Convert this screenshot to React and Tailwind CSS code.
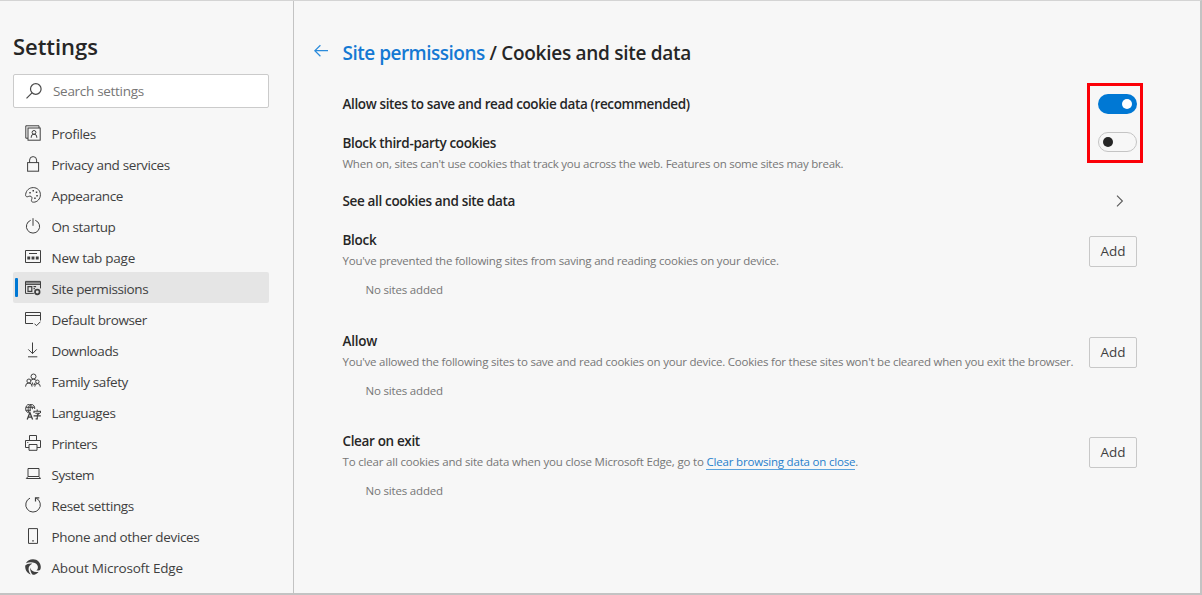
import React from "react";

const Svg = ({ children, className = "h-4 w-4" }) => (
  <svg
    viewBox="0 0 16 16"
    className={`${className} shrink-0`}
    fill="none"
    stroke="currentColor"
    strokeWidth="1"
  >
    {children}
  </svg>
);

const icons = {
  profiles: (
    <Svg>
      <path d="M3 13.2H.8V.8H14V3" />
      <rect x="3" y="3" width="12.2" height="12.2" />
      <circle cx="9" cy="7.4" r="1.9" />
      <path d="M6.2 12.8V12a2.8 2.8 0 0 1 5.6 0v.8" />
    </Svg>
  ),
  lock: (
    <Svg>
      <rect x="2.6" y="6.6" width="11" height="8.6" />
      <path d="M4.6 6.6V4.1a3.5 3.5 0 0 1 7 0v2.5" />
    </Svg>
  ),
  palette: (
    <Svg>
      <path d="M.6 7.6C1.2 3.2 4.300 .6 8.300 .6c4.100 0 7.100 3.100 7.100 7 0 4.500-3.300 7.600-6.800 7.600-2 0-2.600-1.200-2-2.600.6-1.500.5-2.600-.5-3.200C4.300 8.500 3 10 1.900 9.800 1 9.600.4 8.700.6 7.600z" />
      <path
        d="M4.300 4.900h1.500v1.500H4.300zM7.500 3h1.500v1.500H7.500zM10.800 4.600h1.500v1.500h-1.500zM11.300 8h1.500v1.500h-1.500zM9.200 10.600h1.500v1.500H9.200z"
        fill="currentColor"
        stroke="none"
      />
    </Svg>
  ),
  power: (
    <Svg>
      <path d="M8 .2v7.600M5.700 2.300a6.600 6.600 0 1 0 4.600 0" />
    </Svg>
  ),
  newtab: (
    <Svg>
      <path d="M.5 1.500h15v12H.5zM4 4.500h8" />
      <path
        d="M2.300 7.500h2.900v2.900H2.300zM6.550 7.500h2.900v2.900h-2.900zM10.800 7.500h2.900v2.900h-2.900z"
        fill="currentColor"
        stroke="none"
      />
    </Svg>
  ),
  permissions: (
    <Svg>
      <path d="M8.800 13.400H.5V1.400h15v7M.5 4.400h15M.5 2.900h15" />
      <path d="M3 6.600h3.800v4.700H3zM8.500 6.600h2.600M8.500 8.700h1.400" strokeWidth="1.200" />
      <circle cx="12.300" cy="12" r="2.300" strokeWidth="1.700" />
    </Svg>
  ),
  browser: (
    <Svg>
      <path d="M8 12.500H.5V1.500h15v8M.5 4.500h15M9.500 12.700l2 2 4-4" />
    </Svg>
  ),
  download: (
    <Svg>
      <path d="M7.500.5v11M3.300 7.400l4.200 4.200 4.200-4.200M3 14.800h9.300" />
    </Svg>
  ),
  family: (
    <Svg>
      <circle cx="8.500" cy="3.500" r="2.500" />
      <circle cx="3.900" cy="8" r="2" />
      <circle cx="12.400" cy="8.700" r="1.700" />
      <path d="M.6 13.700v-.5a3.200 3.200 0 0 1 6.400 0v.5M9.800 13.700v-.4a2.700 2.700 0 0 1 5.400 0v.4M5.800 7.300a4 4 0 0 1 5.400 0M7.300 9.400l.9 3M10 9.800l-.8 2.200" />
    </Svg>
  ),
  languages: (
    <Svg>
      <path d="M9.700 5A4.500 4.500 0 1 0 3.500 8.800M5.200.5C2.700 2.500 2.700 6.500 4.200 9M5.200.5c1.600 1.100 2.200 2.700 2.200 4.700M.8 3.300h8.600M.8 6.300h5M5.200.5v6" />
      <path d="M2.200 15.600l2.700-7 2.700 7M3.100 13.200h3.600" strokeWidth="1.300" />
      <path d="M12.200 5.500v1.500M9 9V7.300h6.500V9M10.300 9.200h4l-2 1.800v3.900h-1.700M8.600 11.900h7.200" strokeWidth="1.100" />
    </Svg>
  ),
  printer: (
    <Svg>
      <path d="M4.500 5.500v-5h7v5M4 12.500H.5v-7h15v7H12M4 9.500h8v5.800H4z" />
      <path d="M2.300 7.500h1" />
    </Svg>
  ),
  laptop: (
    <Svg>
      <path d="M3 2.500h11v8H3zM3 10.500l-1.700 2h14.200l-1.500-2" />
    </Svg>
  ),
  reset: (
    <Svg>
      <path d="M5 1.100A7.300 7.300 0 1 0 11.300 1.200" />
      <path d="M10.500 4.500v-3.700h3.800" strokeWidth="1.200" />
    </Svg>
  ),
  phone: (
    <Svg>
      <path d="M3.500.6h9v14.800h-9zM7 12.900h2" />
    </Svg>
  ),
  edge: (
    <Svg>
      <g fill="currentColor" stroke="none">
        <path d="M.9 4.300C2.300 1.700 4.900.2 8 .2c4.400 0 7.800 3.500 7.800 7.800 0 1.200-.3 2.200-.8 3.100-1.200.5-2.600.6-3.600.4 1.500-1.300 2-3.200 1.100-5C11.200 3.700 5.600 2.300.9 4.300z" />
        <path d="M.3 6.500C1.700 5 4.600 4.200 7.200 4.700 4.300 6 3.200 8.400 3.700 11.200c.3 1.600 1 2.900 2 4.200C2.100 14.300-.3 10.500.3 6.500z" />
        <path d="M5.200 8.400c.6 3 3.400 5 7.200 4.600.5 0 1-.2 1.400-.3-1.500 1.900-3.700 3.100-6.100 3.100-1.500-1.700-2.900-4.600-2.500-7.400z" />
      </g>
    </Svg>
  ),
};

const items = [
  ["Profiles", "profiles", "tracking-[-0.35px]"],
  ["Privacy and services", "lock", "tracking-[-0.37px]"],
  ["Appearance", "palette", "tracking-[-0.4px]"],
  ["On startup", "power", "tracking-[-0.4px]"],
  ["New tab page", "newtab", "tracking-[-0.25px]"],
  ["Site permissions", "permissions", "tracking-[-0.4px]"],
  ["Default browser", "browser", "tracking-[-0.4px]"],
  ["Downloads", "download", "tracking-[-0.4px]"],
  ["Family safety", "family", "tracking-[-0.4px]"],
  ["Languages", "languages", "tracking-[-0.35px]"],
  ["Printers", "printer", "tracking-[-0.5px]"],
  ["System", "laptop", "tracking-[-0.5px]"],
  ["Reset settings", "reset", "tracking-[-0.35px]"],
  ["Phone and other devices", "phone", "tracking-[-0.34px]"],
  ["About Microsoft Edge", "edge", "tracking-[-0.2px]"],
];

function Sidebar() {
  return (
    <aside className="flex w-[294px] shrink-0 flex-col border-r border-[#c3c3c3] pl-[13px] pr-6">
      <h1 className="mt-[29px] h-8 text-[22px] font-semibold leading-8 tracking-[-0.05px] text-[#262626]">
        Settings
      </h1>
      <div className="mt-3 flex h-[34px] w-64 items-center rounded-[2px] border border-[#cbcbcb] bg-white pl-3 text-[#4a4a4a]">
        <Svg className="h-4 w-4">
          <circle cx="9.800" cy="6" r="5.300" strokeWidth="1.200" />
          <path d="M6 9.800L.5 15.300" strokeWidth="1.200" />
        </Svg>
        <span className="ml-[11px] text-[13.500px] tracking-[-0.3px] text-[#767676]">
          Search settings
        </span>
      </div>
      <nav className="mt-[9px]">
        {items.map(([label, icon, tracking]) => {
          const active = label === "Site permissions";
          return (
            <div
              key={label}
              className={`flex h-[31px] w-64 items-center rounded-[2px] text-[#3f3f3f] ${active ? "bg-[#e5e5e5]" : ""}`}
            >
              <span
                className={`ml-[2px] h-[19px] w-[3px] rounded-[1px] ${active ? "bg-[#0078d4]" : ""}`}
              />
              <span className="ml-[6.500px]">{icons[icon]}</span>
              <span className={`ml-[11px] mt-[2px] text-[13.500px] leading-5 ${tracking}`}>
                {label}
              </span>
            </div>
          );
        })}
      </nav>
    </aside>
  );
}

const Title = ({ children, tracking }) => (
  <div className={`h-5 whitespace-nowrap text-[13.500px] font-semibold leading-5 text-[#262626] ${tracking}`}>
    {children}
  </div>
);

const Desc = ({ children, tracking }) => (
  <div className={`h-[22px] whitespace-nowrap text-[11.500px] leading-[22px] text-[#767676] ${tracking}`}>
    {children}
  </div>
);

function Section({ title, titleTracking, descTracking, children, height }) {
  return (
    <section className={`flex items-start justify-between ${height}`}>
      <div className="w-[731px] pt-[9px]">
        <Title tracking={titleTracking}>{title}</Title>
        <Desc tracking={descTracking}>{children}</Desc>
        <div className="mt-2 pl-[23px] text-[11.500px] leading-5 tracking-[-0.18px] text-[#767676]">
          No sites added
        </div>
      </div>
      <button className="mt-[15px] h-[31px] w-12 rounded-[2px] border border-[#c8c8c8] text-[13.500px] leading-[29px] text-[#3f3f3f]">
        Add
      </button>
    </section>
  );
}

export default function App() {
  return (
    <div className="relative flex h-[595px] w-[1202px] overflow-hidden border-b-2 border-r-2 border-t border-b-[#c3c3c3] border-r-[#c3c3c3] border-t-[#d4d4d4] bg-[#f7f7f7] font-['Open_Sans','Noto_Sans',sans-serif]">
      <Sidebar />
      <main className="w-[843px] shrink-0 pl-5">
        <div className="flex h-[83px] items-start">
          <svg viewBox="0 0 16 16" className="mt-[42px] h-4 w-4 text-[#2b8bdb]" fill="none" stroke="currentColor" strokeWidth="1.200">
            <path d="M14 7.700H.8M6.400 2.200L.8 7.700l5.600 5.500" />
          </svg>
          <h2 className="ml-[12.500px] mt-[37px] whitespace-nowrap text-[19px] font-semibold leading-[30px] tracking-[-0.28px] text-[#262626]">
            <span className="tracking-[-0.5px] text-[#1479d3]">Site permissions</span> / Cookies and site data
          </h2>
        </div>
        <div className="pl-[28.500px]">
          <div className="flex h-10 items-center justify-between">
            <Title tracking="tracking-[-0.37px]">
              Allow sites to save and read cookie data (recommended)
            </Title>
            <div className="flex h-5 w-[39px] items-center justify-end rounded-full bg-[#0078d4] pr-[5px]">
              <span className="h-2.5 w-2.5 rounded-full bg-white" />
            </div>
          </div>
          <div className="flex h-[57px] items-start justify-between">
            <div className="pt-[9px]">
              <Title tracking="tracking-[-0.35px]">Block third-party cookies</Title>
              <Desc tracking="tracking-[-0.245px]">
                When on, sites can't use cookies that track you across the web. Features on some sites may break.
              </Desc>
            </div>
            <div className="mt-2 flex h-5 w-[39px] items-center rounded-full border border-[#c4c4c4] pl-1">
              <span className="h-2.5 w-2.5 rounded-full bg-[#262626]" />
            </div>
          </div>
          <div className="flex h-10 items-center justify-between">
            <Title tracking="tracking-[-0.35px]">See all cookies and site data</Title>
            <svg viewBox="0 0 8 12" className="mr-[13px] h-3 w-2 text-[#5a5a5a]" fill="none" stroke="currentColor" strokeWidth="1.100">
              <path d="M1 .6L6.400 6 1 11.400" />
            </svg>
          </div>
          <Section title="Block" titleTracking="tracking-[-0.3px]" descTracking="tracking-[-0.205px]" height="h-[100.700px]">
            You've prevented the following sites from saving and reading cookies on your device.
          </Section>
          <Section title="Allow" titleTracking="tracking-[-0.25px]" descTracking="tracking-[-0.22px]" height="h-[100.700px]">
            You've allowed the following sites to save and read cookies on your device. Cookies for these sites won't be cleared when you exit the browser.
          </Section>
          <Section title="Clear on exit" titleTracking="tracking-[-0.35px]" descTracking="tracking-[-0.185px]" height="h-[101px]">
            To clear all cookies and site data when you close Microsoft Edge, go to{" "}
            <a className="border-b border-[#5ba3dd] text-[#2880cc]">Clear browsing data on close</a>.
          </Section>
        </div>
      </main>
      <div className="absolute left-[1087px] top-[82px] h-20 w-14 border-[3px] border-[#fb0007]" />
    </div>
  );
}
